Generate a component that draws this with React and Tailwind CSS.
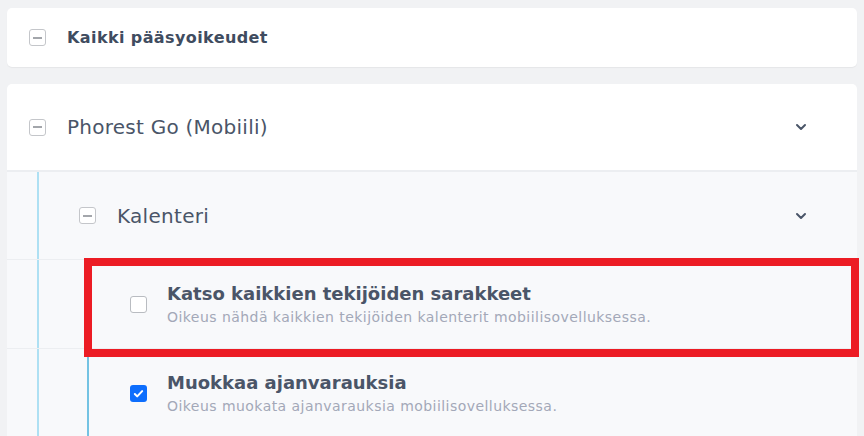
import { ChevronDown } from 'lucide-react';

function MinusBox() {
  return (
    <div className="w-[17px] h-[17px] rounded-[3px] border-[1.5px] border-[#c4c6ca] bg-white flex items-center justify-center shrink-0">
      <div className="w-[9px] h-[2px] bg-[#a3a6ab]" />
    </div>
  );
}

function CheckBox({ checked }) {
  if (checked) {
    return (
      <div className="w-[17px] h-[17px] rounded-[3px] bg-[#0d6efd] flex items-center justify-center shrink-0">
        <svg width="11" height="11" viewBox="0 0 12 12" fill="none">
          <path d="M2 6.5l2.6 2.6L10 3.4" stroke="white" strokeWidth="2.2" strokeLinecap="round" strokeLinejoin="round" />
        </svg>
      </div>
    );
  }
  return <div className="w-[17px] h-[17px] rounded-[3px] border border-[#b9bcc1] bg-white shrink-0" />;
}

function Item({ checked, title, desc }) {
  return (
    <div className="flex h-[89px] border-b border-[#eceef1]">
      <div className="w-[30px] shrink-0" />
      <div className="w-[50px] shrink-0 border-l-2 border-[#aee0f3]" />
      <div className="flex-1 flex items-center border-l-2 border-[#74c3e3] pl-[41px] gap-[20px]">
        <CheckBox checked={checked} />
        <div className="flex flex-col gap-[2px]">
          <div className="text-[18px] leading-[24px] font-bold text-[#4a5568]">{title}</div>
          <div className="text-[14px] leading-[18px] tracking-[0.45px] text-[#a3a8b8]">{desc}</div>
        </div>
      </div>
    </div>
  );
}

export default function App() {
  return (
    <div
      className="relative w-[864px] h-[436px] overflow-hidden bg-[#f1f2f4] pl-[7px] pr-[7px] pt-[8px]"
      style={{ fontFamily: '"DejaVu Sans", "Open Sans", sans-serif' }}
    >
      <div className="h-[59px] bg-white rounded-[5px] shadow-[0_1px_1px_rgba(0,0,0,0.05)] flex items-center pl-[22px] gap-[21px]">
        <MinusBox />
        <span className="text-[16px] tracking-[0.4px] font-bold text-[#3f4c60]">Kaikki pääsyoikeudet</span>
      </div>

      <div className="mt-[17px] bg-white rounded-t-[5px]">
        <div className="h-[88px] flex items-center pl-[22px] pr-[48px] border-b-2 border-[#eceef1]">
          <MinusBox />
          <span className="ml-[21px] text-[20px] tracking-[0.25px] text-[#4a5568]">Phorest Go (Mobiili)</span>
          <ChevronDown className="ml-auto text-[#4a5568]" size={16} strokeWidth={3} />
        </div>

        <div className="bg-[#f8f9fb] h-[300px]">
          <div className="flex h-[88px] border-b border-[#eceef1]">
            <div className="w-[30px] shrink-0" />
            <div className="flex-1 flex items-center border-l-2 border-[#aee0f3] pl-[40px] pr-[48px]">
              <MinusBox />
              <span className="ml-[21px] text-[20px] tracking-[0.3px] text-[#4a5568]">Kalenteri</span>
              <ChevronDown className="ml-auto text-[#4a5568]" size={16} strokeWidth={3} />
            </div>
          </div>
          <Item
            title="Katso kaikkien tekijöiden sarakkeet"
            desc="Oikeus nähdä kaikkien tekijöiden kalenterit mobiilisovelluksessa."
          />
          <Item
            checked
            title="Muokkaa ajanvarauksia"
            desc="Oikeus muokata ajanvarauksia mobiilisovelluksessa."
          />
        </div>
      </div>

      <div className="absolute left-[84px] top-[258px] w-[775px] h-[99px] border-[8px] border-[#ec1c24]" />
    </div>
  );
}
